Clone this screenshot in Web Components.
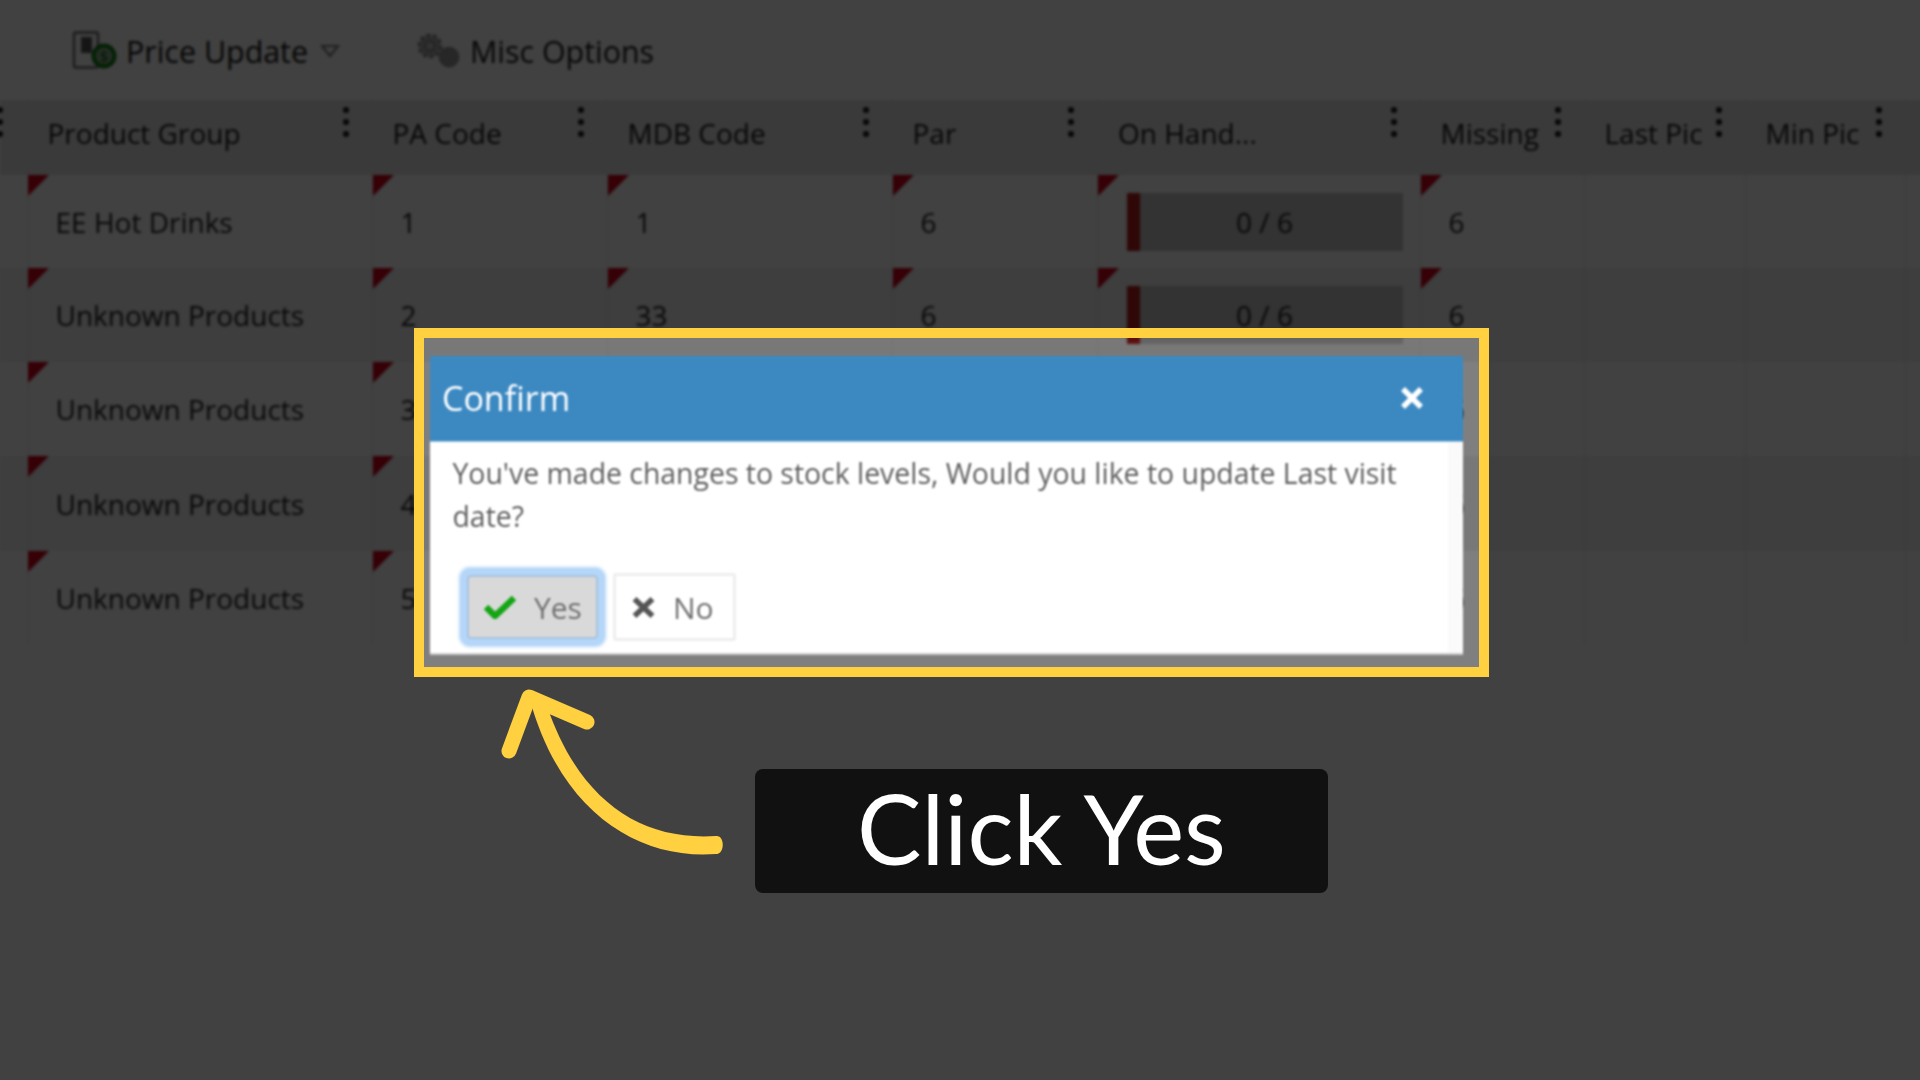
<!DOCTYPE html>
<html><head><meta charset="utf-8"><style>
html,body{margin:0;padding:0;background:#fff;}
</style></head><body>
<app-screen>
  <app-toolbar slot="app"></app-toolbar>
  <data-grid slot="app">
    <grid-row kind="head">
      <grid-head first></grid-head><grid-head label="Product Group"></grid-head><grid-head label="PA Code"></grid-head><grid-head label="MDB Code"></grid-head><grid-head label="Par"></grid-head><grid-head label="On Hand..."></grid-head><grid-head label="Missing"></grid-head><grid-head label="Last Pic"></grid-head><grid-head label="Min Pic"></grid-head><grid-head plain></grid-head>
    </grid-row>
    <grid-row><grid-cell></grid-cell><grid-cell flag>EE Hot Drinks</grid-cell><grid-cell flag>1</grid-cell><grid-cell flag>1</grid-cell><grid-cell flag>6</grid-cell><grid-cell flag bare><stock-bar>0 / 6</stock-bar></grid-cell><grid-cell flag>6</grid-cell><grid-cell></grid-cell><grid-cell></grid-cell><grid-cell></grid-cell></grid-row>
    <grid-row even><grid-cell></grid-cell><grid-cell flag>Unknown Products</grid-cell><grid-cell flag>2</grid-cell><grid-cell flag>33</grid-cell><grid-cell flag>6</grid-cell><grid-cell flag bare><stock-bar>0 / 6</stock-bar></grid-cell><grid-cell flag>6</grid-cell><grid-cell></grid-cell><grid-cell></grid-cell><grid-cell></grid-cell></grid-row>
    <grid-row><grid-cell></grid-cell><grid-cell flag>Unknown Products</grid-cell><grid-cell flag>3</grid-cell><grid-cell></grid-cell><grid-cell></grid-cell><grid-cell></grid-cell><grid-cell>6</grid-cell><grid-cell></grid-cell><grid-cell></grid-cell><grid-cell></grid-cell></grid-row>
    <grid-row even><grid-cell></grid-cell><grid-cell flag>Unknown Products</grid-cell><grid-cell flag>4</grid-cell><grid-cell></grid-cell><grid-cell></grid-cell><grid-cell></grid-cell><grid-cell>6</grid-cell><grid-cell></grid-cell><grid-cell></grid-cell><grid-cell></grid-cell></grid-row>
    <grid-row><grid-cell></grid-cell><grid-cell flag>Unknown Products</grid-cell><grid-cell flag>5</grid-cell><grid-cell></grid-cell><grid-cell></grid-cell><grid-cell></grid-cell><grid-cell>6</grid-cell><grid-cell></grid-cell><grid-cell></grid-cell><grid-cell></grid-cell></grid-row>
  </data-grid>
  <confirm-dialog slot="modal"></confirm-dialog>
  <spot-frame slot="over"></spot-frame>
  <hint-arrow slot="over"></hint-arrow>
  <hint-label slot="over">Click Yes</hint-label>
</app-screen>
<script>
const FONT='"Open Sans","Noto Sans",sans-serif';
function def(name,html){
  customElements.define(name,class extends HTMLElement{
    constructor(){super();this.attachShadow({mode:'open'}).innerHTML=typeof html==='function'?html(this):html;}
  });
}
def('app-screen',`<style>
:host{display:block;position:relative;width:1920px;height:1080px;overflow:hidden;background:#fff;font-family:${FONT};}
.app{filter:blur(1.7px);height:100%;background:#fff;--cols:27.5px 345px 235px 285px 205.5px 322.5px 164px 161px 160.4px 1fr;}
.veil{position:absolute;inset:0;background:rgba(0,0,0,.5);}
</style><div class="app"><slot name="app"></slot></div><div class="veil"></div><slot name="modal"></slot><slot name="over"></slot>`);
def('app-toolbar',`<style>
:host{display:flex;align-items:center;height:100px;box-sizing:border-box;padding:2px 0 0 72px;font-size:30.4px;color:#141414;}
svg{display:block;flex:none}
.t1{margin-left:8px;width:194px}.t2{margin-left:9px}
.m{margin-left:76px}
</style>
<svg width="46" height="40" viewBox="0 0 46 40"><rect x="2" y="1.5" width="24" height="35" rx="2" fill="none" stroke="#6a6a6a" stroke-width="2.5"/><rect x="9" y="6" width="11" height="16" fill="#555"/><circle cx="32" cy="25" r="10.5" fill="#8fae8f" stroke="#0a7a0a" stroke-width="4"/><text x="32" y="31" font-size="15" text-anchor="middle" fill="#0a5a0a" font-family="Open Sans">$</text></svg>
<span class="t1">Price Update</span>
<svg width="20" height="14" viewBox="0 0 20 14"><path d="M2 2H18L10 12Z" fill="none" stroke="#7c7c7c" stroke-width="2.2"/></svg>
<svg class="m" width="45" height="36" viewBox="0 0 45 36"><circle cx="14" cy="13" r="10.5" fill="#b8b8b8" stroke="#8c8c8c" stroke-width="4" stroke-dasharray="4 2.5"/><circle cx="14" cy="13" r="5" fill="#c4c4c4" stroke="#8a8a8a" stroke-width="2.5"/><circle cx="33" cy="24" r="9.5" fill="#9a9a9a" stroke="#8a8a8a" stroke-width="1.5"/></svg>
<span class="t2">Misc Options</span>`);
def('data-grid',`<style>:host{display:grid;grid-template-rows:75px 93px 94px 94px 95px 94px;}</style><slot></slot>`);
def('grid-row',`<style>
:host{display:grid;grid-template-columns:var(--cols);background:#fff;}
:host([even]){background:#f1f1f1;}
:host([kind=head]){background:#e4e4e4;}
</style><slot></slot>`);
def('grid-head',t=>{const l=t.getAttribute('label');const p=t.hasAttribute('plain');const f=t.hasAttribute('first');return `<style>
:host{display:flex;justify-content:space-between;align-items:flex-start;box-sizing:border-box;border-right:1.5px solid #d8d8d8;font-size:28px;color:#141414;padding:0 23px 0 20px;min-width:0;white-space:nowrap;position:relative;}
:host([first]){padding:0;justify-content:flex-start;}
span{margin-top:14px;}
i{display:flex;flex-direction:column;gap:6px;margin-top:7px;flex:none;width:6px;}
:host([first]) i{margin-left:-3px;}
b{display:block;width:6px;height:6px;border-radius:50%;background:#141414;}
:host([plain]){border-right:0}
</style>${f?'':`<span>${l||''}</span>`}${p?'':`<i><b></b><b></b><b></b></i>`}`});
def('grid-cell',`<style>
:host{display:flex;align-items:center;box-sizing:border-box;position:relative;border-right:1.5px solid #e2e2e2;padding:0 0 0 28px;font-size:28px;color:#1c1c1c;white-space:nowrap;min-width:0;}
:host([bare]){padding:0 17px 0 28.5px;}
:host(:last-child){border-right:0}
.f{display:none;position:absolute;left:0;top:0;width:0;height:0;border-style:solid;border-width:21px 21px 0 0;border-color:#d00018 transparent transparent transparent;}
:host([flag]) .f{display:block}
</style><span class="f"></span><slot></slot>`);
def('stock-bar',`<style>
:host{display:flex;align-items:center;justify-content:center;position:relative;flex:1;height:58px;background:#c6c6c6;color:#1c1c1c;font-size:28px;}
.r{position:absolute;left:0;top:0;bottom:0;width:13px;background:#b91c1c;}
</style><span class="r"></span><slot></slot>`);
def('confirm-dialog',`<style>
:host{display:block;position:absolute;left:430px;top:356px;width:1033px;height:299px;font-family:${FONT};filter:blur(.95px);}
.box{height:100%;box-sizing:border-box;background:#fff;display:flex;flex-direction:column;border-bottom:2px solid #ccc;position:relative;}
.bar{height:86px;flex:none;box-sizing:border-box;background:#3c89c2;border-bottom:1.5px solid #9fc6e2;display:flex;align-items:center;justify-content:space-between;padding:0 39px 2px 12px;color:#fff;font-size:34px;}
.msg{margin:10px 48px 0 22.5px;font-size:28.4px;line-height:43px;color:#606060;}
.btns{display:flex;gap:15px;margin:auto 0 12px 37px;align-items:center;}
.strip{position:absolute;right:0;top:86px;bottom:0;width:15px;background:#fafafa;}
.btn{display:inline-flex;align-items:center;box-sizing:border-box;height:68px;font-size:30px;color:#707070;background:#fff;border:3px solid #eee;border-radius:3px;padding:0 19px;gap:18px;}
.yes{background:#d9d9d9;border:2px solid #a9c4df;height:64px;width:131px;padding:0 0 0 15px;box-shadow:0 0 0 6px #b4d6f8,0 0 3px 8px #b4d6f8;border-radius:4px;}
.no{width:123px;padding:0 0 0 16px}
svg{display:block;flex:none}
</style><div class="box"><div class="strip"></div><div class="bar"><span>Confirm</span>
<svg width="24" height="22" viewBox="0 0 24 22"><path d="M3 2L21 20M21 2L3 20" stroke="#fff" stroke-width="5.5" fill="none"/></svg></div>
<div class="msg">You've made changes to stock levels, Would you like to update Last visit date?</div>
<div class="btns"><span class="btn yes"><svg width="32" height="24" viewBox="0 0 32 24"><path d="M2 12L11 21L30 3" stroke="#15a515" stroke-width="6.5" fill="none"/></svg><span>Yes</span></span>
<span class="btn no"><svg width="23" height="21" viewBox="0 0 23 21"><path d="M2.5 2L20.5 19M20.5 2L2.5 19" stroke="#555" stroke-width="5.5" fill="none"/></svg><span>No</span></span></div></div>`);
def('spot-frame',`<style>
:host{display:block;position:absolute;left:414px;top:328px;width:1075px;height:349px;box-sizing:border-box;border:10px solid #ffd040;box-shadow:0 0 0 3000px rgba(0,0,0,.49);}
</style>`);
def('hint-arrow',`<style>
:host{display:block;position:absolute;left:490px;top:670px;}
svg{display:block}
</style><svg width="250" height="200" viewBox="490 670 250 200"><path d="M716 836C725 835 725 854 716 854C638 860 561 812 530 700L547 706C579 800 640 841 716 836Z" fill="#ffd040"/><path d="M509 751L529 697L587 722" fill="none" stroke="#ffd040" stroke-width="15" stroke-linecap="round" stroke-linejoin="round"/></svg>`);
def('hint-label',`<style>
:host{display:flex;align-items:center;justify-content:center;position:absolute;left:755px;top:769px;width:573px;height:124px;background:#111;border-radius:8px;color:#fff;font:96.5px/1 Lato,sans-serif;}
span{margin-top:-6px}
</style><span><slot></slot></span>`);
</script>
</body></html>
